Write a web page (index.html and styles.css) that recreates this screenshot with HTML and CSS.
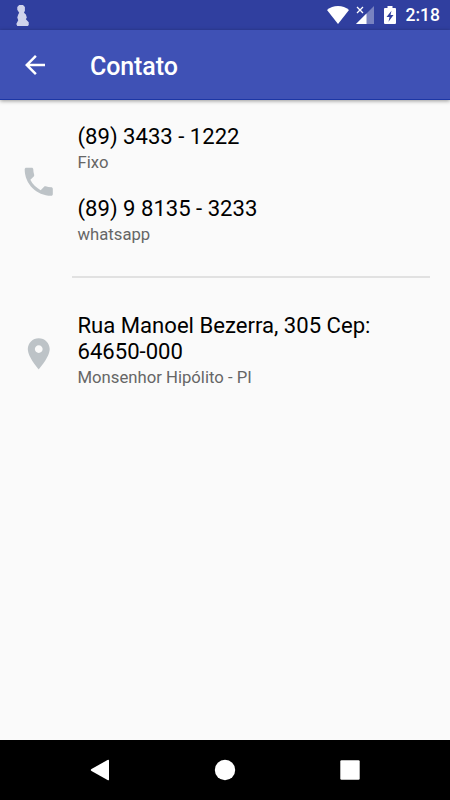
FILE: index.html
```html
<!DOCTYPE html>
<html lang="pt-BR">
<head>
  <meta charset="UTF-8" />
  <meta name="viewport" content="width=device-width, initial-scale=1.0"/>
  <title>Contato</title>
  <link rel="stylesheet" href="styles.css">
</head>
<body>
  <div class="screen">
    <div class="status-bar">
      <svg class="notification" width="16" height="21" viewBox="0 0 16 22">
        <path d="M4 0h4l2 2v4l-1 2 2 2 1 3-1 2 3 3v3l-1 1H2l-1-2 2-4-1-3 1-3 1-2-2-3V2z"/>
      </svg>
      <div class="status-icons">
        <svg class="wifi" width="22" height="18" viewBox="0 0 22 18">
          <path d="M11 18L0 4C3 1.600 6.800 0 11 0s8 1.600 11 4z"/>
        </svg>
        <svg class="signal" width="18" height="18" viewBox="0 0 18 18">
          <path d="M18 0v18H0z" opacity=".35"/>
          <path d="M10.500 7.500V18H0z"/>
          <path class="signal-cross" d="M1 1l6 6M7 1L1 7"/>
        </svg>
        <svg class="battery" width="12" height="18" viewBox="0 0 12 19" preserveAspectRatio="none">
          <path fill-rule="evenodd" d="M3.500 0h5v2H11q1 0 1 1v15q0 1-1 1H1q-1 0-1-1V3q0-1 1-1h2.500zM7.500 5L2.500 11.500H5.500L4.500 16.500 9.500 9.500H6.500z"/>
        </svg>
      </div>
      <span class="time">2:18</span>
    </div>

    <div class="toolbar">
      <svg class="back" width="30" height="30" viewBox="0 0 24 24">
        <path d="M20 11H7.830l5.590-5.590L12 4l-8 8 8 8 1.410-1.410L7.830 13H20v-2z"/>
      </svg>
      <h1 class="title">Contato</h1>
    </div>

    <div class="content">
      <!-- Telefones -->
      <div class="row phones">
        <svg class="icon" viewBox="0 0 24 24">
          <path d="M6.620 10.790c1.440 2.830 3.760 5.140 6.590 6.590l2.200-2.200c.27-.27.67-.36 1.020-.24 1.120.37 2.330.57 3.570.57.55 0 1 .45 1 1V20c0 .55-.45 1-1 1-9.390 0-17-7.610-17-17 0-.55.45-1 1-1h3.500c.55 0 1 .45 1 1 0 1.250.2 2.450.57 3.570.11.35.03.74-.25 1.020l-2.200 2.200z"/>
        </svg>
        <div class="details">
          <div class="entry">
            <div class="value">(89) 3433 - 1222</div>
            <div class="label">Fixo</div>
          </div>
          <div class="entry">
            <div class="value">(89) 9 8135 - 3233</div>
            <div class="label">whatsapp</div>
          </div>
        </div>
      </div>

      <div class="divider"></div>

      <!-- Endereço -->
      <div class="row address">
        <svg class="icon" viewBox="0 0 24 24">
          <path d="M12 2C8.130 2 5 5.130 5 9c0 5.250 7 13 7 13s7-7.750 7-13c0-3.870-3.130-7-7-7zm0 9.500c-1.380 0-2.500-1.120-2.500-2.500s1.120-2.500 2.500-2.500 2.500 1.120 2.500 2.500-1.120 2.500-2.500 2.500z"/>
        </svg>
        <div class="details">
          <div class="entry">
            <div class="value">Rua Manoel Bezerra, 305 Cep: 64650-000</div>
            <div class="label">Monsenhor Hipólito - PI</div>
          </div>
        </div>
      </div>
    </div>

    <div class="nav-bar">
      <svg width="22" height="22" viewBox="0 0 22 22">
        <path d="M18.500 1q1.500-.8 1.500.6v18.800q0 1.400-1.500.6L2.500 12q-1.500-1 0-2z"/>
      </svg>
      <svg width="22" height="22" viewBox="0 0 22 22">
        <circle cx="11" cy="11" r="10.200"/>
      </svg>
      <svg width="22" height="22" viewBox="0 0 22 22">
        <rect x="1.300" y="1.300" width="19.400" height="19.400" rx="1.200"/>
      </svg>
    </div>
  </div>
</body>
</html>
```
FILE: styles.css
```css
* {
  box-sizing: border-box;
}

body {
  margin: 0;
  font-family: Roboto, sans-serif;
  background-color: #fafafa;
}

svg {
  display: block;
  flex-shrink: 0;
  fill: #fff;
}

.screen {
  display: flex;
  flex-direction: column;
  width: 450px;
  height: 800px;
}

.status-bar {
  display: flex;
  align-items: center;
  height: 30px;
  padding: 0 10px 0 15px;
  background-color: #303f9f;
  color: #fff;
}

.notification {
  margin-top: 1px;
  fill: #d0d3eb;
}

.status-icons {
  display: flex;
  align-items: center;
  margin-left: auto;
}

.wifi {
  margin-right: 7px;
}

.signal-cross {
  stroke: #fff;
  stroke-width: 1.3;
}

.battery {
  margin-left: 10px;
}

.time {
  margin-left: 10px;
  font-size: 17.5px;
  font-weight: 500;
  line-height: 32px;
}

.toolbar {
  display: flex;
  align-items: center;
  height: 70px;
  padding: 0 20px;
  background-color: #3f51b5;
  border-bottom: 1px solid #1c36a5;
  box-shadow: 0 1px 4px rgba(0, 0, 0, 0.4);
}

.title {
  margin: 3px 0 0 40px;
  color: #fff;
  font-size: 25px;
  font-weight: 500;
  letter-spacing: -0.1px;
}

.content {
  flex: 1;
  padding: 23px 20px 0;
}

.row {
  display: flex;
  align-items: center;
}

.icon {
  width: 37.5px;
  height: 37.5px;
  fill: #bdc3c7;
}

.phones .icon {
  margin-bottom: 5px;
}

.address .icon {
  margin-top: 6px;
}

.details {
  flex: 1;
  margin-left: 20px;
}

.phones .entry + .entry {
  margin-top: 21px;
}

.value {
  color: #000;
  font-size: 22.1px;
  line-height: 26px;
}

.label {
  margin-top: 3px;
  color: #666;
  font-size: 16.7px;
  line-height: 22px;
}

.divider {
  height: 2px;
  margin: 30px 0 34px 52px;
  background-color: #e1e1e1;
}

.nav-bar {
  display: flex;
  align-items: center;
  justify-content: space-between;
  height: 60px;
  padding: 0 89px;
  background-color: #000;
}
```
